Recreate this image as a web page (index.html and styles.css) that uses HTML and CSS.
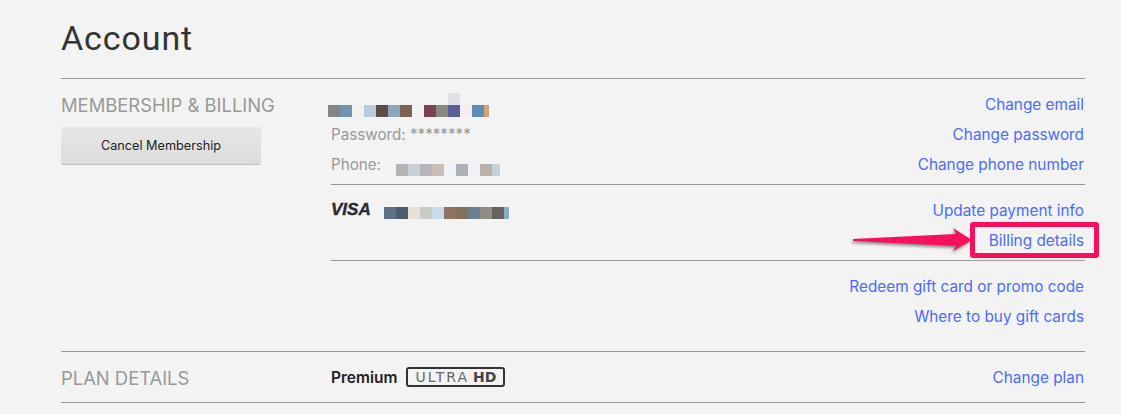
FILE: index.html
```html
<!DOCTYPE html>
<html lang="en">
<head>
  <meta charset="UTF-8">
  <title>Account</title>
  <link rel="stylesheet" href="styles.css">
</head>
<body>

<div class="container">
  <h1>Account</h1>

  <div class="section">
    <div class="side">
      <h2>MEMBERSHIP &amp; BILLING</h2>
      <button class="cancel">Cancel Membership</button>
    </div>
    <div class="main">
      <div class="group">
        <div class="row">
          <div class="mosaic email-blur">
            <i style="background:#848482"></i><i style="background:#7393b1"></i><i style="background:#f3f1ed"></i><i style="background:#b6cce0"></i><i style="background:#5f4a45"></i><i style="background:#8da5bd"></i><i style="background:#7f5f57"></i><i style="background:#f3f2f2"></i><i style="background:#7b4253"></i><i style="background:#888985"></i><i style="background:#5a5e98"></i><i style="background:#f3eff0"></i><i style="background:#5f8bb5"></i><i class="half" style="background:#cda66c"></i>
            <b class="blur-top"></b>
          </div>
          <a href="#">Change email</a>
        </div>
        <div class="row">
          <span class="muted">Password: ********</span>
          <a href="#">Change password</a>
        </div>
        <div class="row">
          <span class="phone">
            <span class="muted">Phone:</span>
            <span class="mosaic phone-blur">
              <i style="background:#b5b3b3"></i><i style="background:#c6d0d9"></i><i style="background:#b7b5b5"></i><i style="background:#c9bdb5"></i><i style="background:#f0f1f5"></i><i style="background:#aab0b7"></i><i style="background:#f1f1f1"></i><i style="background:#bcb1aa"></i><i class="small" style="background:#c0d3da"></i>
            </span>
          </span>
          <a href="#">Change phone number</a>
        </div>
      </div>

      <div class="group card">
        <div class="row">
          <span class="visa-line">
            <span class="visa">VISA</span>
            <span class="mosaic card-blur">
              <i style="background:#5c7087"></i><i style="background:#4b5d6d"></i><i style="background:#ebe0d5"></i><i style="background:#c6cdc9"></i><i style="background:#c9dcea"></i><i style="background:#92725f"></i><i style="background:#857059"></i><i style="background:#6a7f91"></i><i style="background:#908d84"></i><i style="background:#67625f"></i><i class="half" style="background:#89abc4"></i>
            </span>
          </span>
          <a href="#">Update payment info</a>
        </div>
        <div class="row">
          <span></span>
          <a href="#">Billing details</a>
        </div>
      </div>

      <div class="group gift">
        <div class="row"><span></span><a href="#">Redeem gift card or promo code</a></div>
        <div class="row"><span></span><a href="#">Where to buy gift cards</a></div>
      </div>
    </div>
  </div>

  <div class="section plan">
    <div class="side">
      <h2>PLAN DETAILS</h2>
    </div>
    <div class="main">
      <div class="row">
        <span class="plan-name">
          <strong>Premium</strong>
          <span class="uhd"><span class="ultra">ULTRA</span><b>HD</b></span>
        </span>
        <a href="#">Change plan</a>
      </div>
    </div>
  </div>
</div>

<!-- annotation drawn over the page -->
<div class="callout"></div>
<svg class="arrow" width="130" height="34" viewBox="0 0 130 34">
  <polygon class="arrow-body" points="2,16 105,11 102,5 121,17 102,28 105,23 2,18"/>
</svg>

</body>
</html>
```

FILE: styles.css
```css
* {
  box-sizing: border-box;
}

body {
  margin: 0;
  height: 414px;
  overflow: hidden;
  background: #f3f3f3;
  font-family: Inter, Roboto, sans-serif;
  font-size: 15.2px;
  color: #333;
  position: relative;
}

.container {
  margin-left: 61px;
  width: 1024px;
}

h1 {
  margin: 0;
  height: 78px;
  padding-top: 18px;
  font-family: Roboto, sans-serif;
  font-size: 34px;
  line-height: 40px;
  font-weight: 400;
  letter-spacing: 0.9px;
  color: #333;
}

.section {
  display: flex;
  border-top: 1px solid #999;
}

.side {
  width: 270px;
  flex-shrink: 0;
}

h2 {
  margin: 0;
  font-size: 18.4px;
  line-height: 22px;
  font-weight: 400;
  color: #999;
  padding-top: 15px;
}

.cancel {
  display: block;
  margin-top: 11px;
  width: 200px;
  height: 37px;
  border: none;
  border-radius: 2px;
  background: linear-gradient(#e6e6e6, #dddddd);
  box-shadow: 0 1px 0 rgba(0, 0, 0, 0.2);
  font-family: Inter, Roboto, sans-serif;
  font-size: 12.7px;
  color: #222;
}

.main {
  flex: 1;
}

.row {
  display: flex;
  justify-content: space-between;
  align-items: center;
  height: 30px;
  padding-bottom: 2px;
}

.group {
  padding: 11px 0 4px;
}

.card {
  border-top: 1px solid #999;
  padding: 11px 0 4px;
}

.gift {
  border-top: 1px solid #999;
  padding: 11px 0 19px;
}

a {
  color: #4a6cf7;
  text-decoration: none;
  font-size: 15.35px;
  margin-right: 1px;
}

.muted {
  color: #999;
}

.mosaic {
  display: inline-flex;
  position: relative;
}

.mosaic i {
  display: block;
  width: 12px;
  height: 12px;
}

.mosaic i.half {
  width: 5px;
}

.mosaic i.small {
  width: 8px;
}

.email-blur {
  margin: 14px 0 0 -3px;
}

.phone-blur {
  margin: 12px 0 0 2px;
}

.card-blur {
  margin-top: 6px;
}

.blur-top {
  position: absolute;
  left: 120px;
  top: -12px;
  width: 12px;
  height: 12px;
  background: #e1e1ea;
}

.phone {
  display: flex;
  align-items: center;
  gap: 13px;
}

.visa-line {
  display: flex;
  align-items: center;
  gap: 13px;
}

.visa {
  font-family: "Liberation Sans", sans-serif;
  font-size: 17px;
  font-weight: 700;
  font-style: italic;
  color: #2b2b33;
  width: 40px;
  -webkit-text-stroke: 0.4px #2b2b33;
}

.plan .row {
  height: 50px;
  padding-bottom: 1px;
}

.plan a {
  margin-top: 2px;
}

.plan {
  border-bottom: 1px solid #999;
}

.plan-name {
  display: flex;
  align-items: center;
  gap: 9px;
}

.plan-name strong {
  margin-top: 2px;
  font-weight: 600;
  font-size: 15.5px;
  color: #222;
}

.uhd {
  display: flex;
  align-items: center;
  justify-content: center;
  gap: 4px;
  width: 99px;
  height: 20px;
  border: 2px solid #333;
  border-radius: 3px;
  font-family: "DejaVu Sans", sans-serif;
  font-size: 14px;
  color: #444;
  white-space: nowrap;
}

.ultra {
  font-weight: 400;
  letter-spacing: 2px;
  color: #666;
}

.uhd b {
  font-weight: 700;
}

.callout {
  position: absolute;
  left: 970px;
  top: 222px;
  width: 129px;
  height: 36px;
  border: 5px solid #f8105c;
  border-radius: 3px;
}

.arrow {
  position: absolute;
  left: 851px;
  top: 223px;
  overflow: visible;
  filter: drop-shadow(-1px 2px 1.5px rgba(0, 0, 0, 0.45));
}

.arrow-body {
  fill: #f8105c;
}
```
